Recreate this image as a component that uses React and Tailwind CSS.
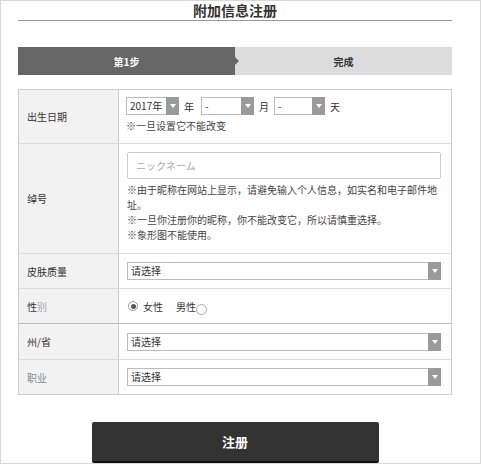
const Arrow = () => (
  <span className="w-[13px] self-stretch -my-px -mr-px bg-[#9a9a9a] flex items-center justify-center">
    <span className="w-0 h-0 border-l-[3px] border-r-[3px] border-t-[4px] border-l-transparent border-r-transparent border-t-white" />
  </span>
);

const Select = ({ text, className }) => (
  <div className={"flex h-[18px] border border-[#bbb] bg-white " + (className || "")}>
    <span className="flex-1 pl-[3px] leading-[16px] text-[10px] text-[#333]">{text}</span>
    <Arrow />
  </div>
);

const Row = ({ label, children, labelBorder, rowBorder, h, top }) => (
  <div className={"flex " + (top ? "" : rowBorder)} style={{ height: h }}>
    <div className={"w-[99px] shrink-0 bg-[#f2f2f2] flex items-center pl-[8px] text-[10px] text-[#333] " + (top ? "" : labelBorder)}>
      {label}
    </div>
    <div className="flex-1 border-l border-[#cfcfcf] bg-white">{children}</div>
  </div>
);

export default function App() {
  return (
    <div className="w-[481px] h-[464px] border border-[#d8d8d8] bg-white font-['Noto_Sans_CJK_SC','Noto_Sans',sans-serif] text-[#333]">
      <div className="ml-[17px] w-[434px]">
        <h2 className="text-[14px] font-bold leading-[19px] text-center border-b border-[#999] text-[#333]">附加信息注册</h2>

        <div className="mt-[26px] flex h-[28px] text-[10px] font-bold">
          <div className="relative w-[217px] bg-[#666] text-white flex items-center justify-center">
            第1步
            <span className="absolute -right-[4px] top-1/2 -translate-y-1/2 w-0 h-0 border-y-[4px] border-l-[4px] border-y-transparent border-l-[#666]" />
          </div>
          <div className="flex-1 bg-[#dcdcdc] flex items-center justify-center text-[#333]">完成</div>
        </div>

        <div className="mt-[14px] border border-[#cfcfcf]">
          <Row label="出生日期" h="53px" top>
            <div className="pt-[7px] pl-[7px] text-[10px]">
              <div className="flex items-center">
                <Select text="2017年" className="w-[53px]" />
                <span className="ml-[5px]">年</span>
                <Select text="-" className="w-[53px] ml-[7px]" />
                <span className="ml-[5px]">月</span>
                <Select text="-" className="w-[51px] ml-[5px]" />
                <span className="ml-[5px]">天</span>
              </div>
              <p className="mt-[4px] leading-[14px] text-[#444]">※一旦设置它不能改变</p>
            </div>
          </Row>

          <Row label="绰号" h="110px" rowBorder="border-t border-[#ddd]" labelBorder="">
            <div className="pt-[8px] pl-[8px] pr-[10px] text-[10px]">
              <div className="h-[27px] border border-[#ccc] rounded-[2px] flex items-center pl-[8px] text-[#aaa]">ニックネーム</div>
              <div className="mt-[3px] leading-[15px] text-[#444] pr-[4px]">
                <p>※由于昵称在网站上显示，请避免输入个人信息，如实名和电子邮件地址。</p>
                <p>※一旦你注册你的昵称，你不能改变它，所以请慎重选择。</p>
                <p>※象形图不能使用。</p>
              </div>
            </div>
          </Row>

          <Row label="皮肤质量" h="35px" rowBorder="border-t border-[#ddd]">
            <div className="h-full flex items-center pl-[8px] pr-[10px]">
              <Select text="请选择" className="w-full" />
            </div>
          </Row>

          <Row label={<span>性<span className="text-[#aaa]">别</span></span>} h="35px" rowBorder="border-t border-[#ddd]">
            <div className="h-full flex items-center pl-[9px] text-[10px] text-[#333]">
              <span className="w-[10px] h-[10px] rounded-full border border-[#999] bg-white flex items-center justify-center">
                <span className="w-[5px] h-[5px] rounded-full bg-[#555]" />
              </span>
              <span className="ml-[5px]">女性</span>
              <span className="ml-[13px]">男性</span>
              <span className="mt-[7px] w-[11px] h-[11px] rounded-full border border-[#aaa] bg-white" />
            </div>
          </Row>

          <div className="border-t border-[#bbb]">
            <Row label="州/省" h="35px" top>
              <div className="h-full flex items-center pl-[8px] pr-[10px]">
                <Select text="请选择" className="w-full" />
              </div>
            </Row>
          </div>

          <Row label={<span className="text-[#888]">职业</span>} h="35px" rowBorder="border-t border-[#ddd]">
            <div className="h-full flex items-center pl-[8px] pr-[10px]">
              <Select text="请选择" className="w-full" />
            </div>
          </Row>
        </div>

        <div className="mt-[27px] flex justify-center">
          <button className="w-[287px] h-[41px] bg-[#333] border-b-2 border-[#111] rounded-[2px] text-white text-[13px] font-bold">注册</button>
        </div>
      </div>
    </div>
  );
}
